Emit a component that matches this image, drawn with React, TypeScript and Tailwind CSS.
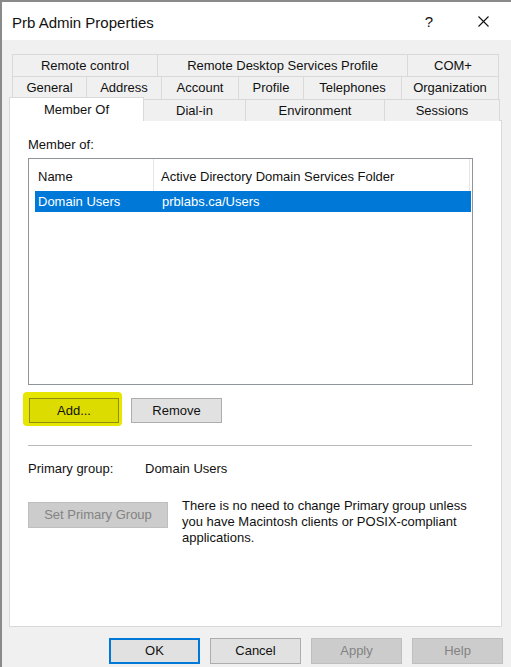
import React from 'react';

const tabBase = 'flex items-center justify-center border-l border-t border-[#d9d9d9] bg-[#f0f0f0] whitespace-nowrap';
const btn = 'flex items-center justify-center h-[25px] border border-[#adadad] bg-[#e1e1e1]';
const btnOff = 'flex items-center justify-center h-[25px] border border-[#bfbfbf] bg-[#cccccc] text-[#838383]';

export default function App() {
  return (
    <div className="w-[511px] h-[667px] overflow-hidden bg-[#f0f0f0] border-l-2 border-t-2 border-[#8a8a8a] font-['Liberation_Sans',Arial,sans-serif] text-[13px] leading-[16px] text-[#111]">
      {/* title bar */}
      <div className="h-[38px] bg-white flex items-center pl-[10px] pr-[22px]">
        <span className="text-[15px] pt-[3px]">Prb Admin Properties</span>
        <span className="ml-auto text-[15px] pt-[1px]">?</span>
        <svg className="ml-[45px]" width="11" height="11" viewBox="0 0 11 11">
          <path d="M0.5 0.5 L10.5 10.5 M10.5 0.5 L0.5 10.5" stroke="#111" strokeWidth="1.1" />
        </svg>
      </div>

      <div className="mt-[14px] pl-[7px]">
        {/* tab rows */}
        <div className="ml-[3px] flex h-[22px]">
          <div className={`${tabBase} w-[145px]`}>Remote control</div>
          <div className={`${tabBase} w-[250px]`}>Remote Desktop Services Profile</div>
          <div className={`${tabBase} w-[92px] border-r`}>COM+</div>
        </div>
        <div className="ml-[3px] flex h-[23px]">
          <div className={`${tabBase} w-[74px]`}>General</div>
          <div className={`${tabBase} w-[75px]`}>Address</div>
          <div className={`${tabBase} w-[77px]`}>Account</div>
          <div className={`${tabBase} w-[65px]`}>Profile</div>
          <div className={`${tabBase} w-[98px]`}>Telephones</div>
          <div className={`${tabBase} w-[98px] border-r`}>Organization</div>
        </div>
        <div className="-mt-[2px] -mb-px flex items-end h-[24px]">
          <div className="relative z-10 flex items-center justify-center w-[135px] h-[24px] bg-white border-l border-t border-r border-[#d9d9d9]">Member Of</div>
          <div className={`${tabBase} w-[101px] h-[22px] border-l-0`}>Dial-in</div>
          <div className={`${tabBase} w-[139px] h-[22px]`}>Environment</div>
          <div className={`${tabBase} w-[116px] h-[22px] border-r`}>Sessions</div>
        </div>

        {/* page */}
        <div className="w-[493px] h-[507px] bg-white border border-[#d9d9d9] pt-[16px] pl-[18px]">
          <div>Member of:</div>

          <div className="mt-[5px] w-[445px] h-[227px] border border-[#8f939a] bg-white">
            <div className="flex h-[32px] items-center">
              <div className="w-[125px] h-full pl-[9px] pt-[3px] flex items-center border-r border-[#e5e5e5]">Name</div>
              <div className="w-[316px] h-full pl-[7px] pt-[3px] flex items-center border-r border-[#e5e5e5] whitespace-nowrap">Active Directory Domain Services Folder</div>
            </div>
            <div className="ml-[6px] w-[436px] h-[21px] flex items-center bg-[#0078d7] text-white">
              <div className="w-[127px] pl-[3px]">Domain Users</div>
              <div>prblabs.ca/Users</div>
            </div>
          </div>

          <div className="mt-[7px] flex items-start">
            <div className="-ml-[5px] pl-[6px] pt-[6px] pr-[3px] pb-[3px] bg-[#e6e600] rounded-[4px]">
              <div className="flex items-center justify-center w-[90px] h-[25px] border border-[#8d8d10] bg-[#dcdc00]">Add...</div>
            </div>
            <div className={`${btn} w-[91px] ml-[9px] mt-[6px]`}>Remove</div>
          </div>

          <div className="mt-[19px] w-[444px] h-px bg-[#b9b9b9]" />

          <div className="mt-[15px] flex">
            <span className="w-[117px]">Primary group:</span>
            <span>Domain Users</span>
          </div>

          <div className="mt-[21px] flex items-start">
            <div className={`${btnOff} w-[140px] h-[26px] mt-[4px]`}>Set Primary Group</div>
            <p className="ml-[14px] leading-[16px]">
              There is no need to change Primary group unless<br />
              you have Macintosh clients or POSIX-compliant<br />
              applications.
            </p>
          </div>
        </div>
      </div>

      {/* dialog buttons */}
      <div className="mt-[11px] ml-[107px] flex gap-[10px]">
        <div className="flex items-center justify-center w-[91px] h-[26px] border-2 border-[#0078d7] bg-[#e1e1e1]">OK</div>
        <div className={`${btn} w-[91px] h-[26px]`}>Cancel</div>
        <div className={`${btnOff} w-[91px] h-[26px]`}>Apply</div>
        <div className={`${btnOff} w-[91px] h-[26px]`}>Help</div>
      </div>
    </div>
  );
}
